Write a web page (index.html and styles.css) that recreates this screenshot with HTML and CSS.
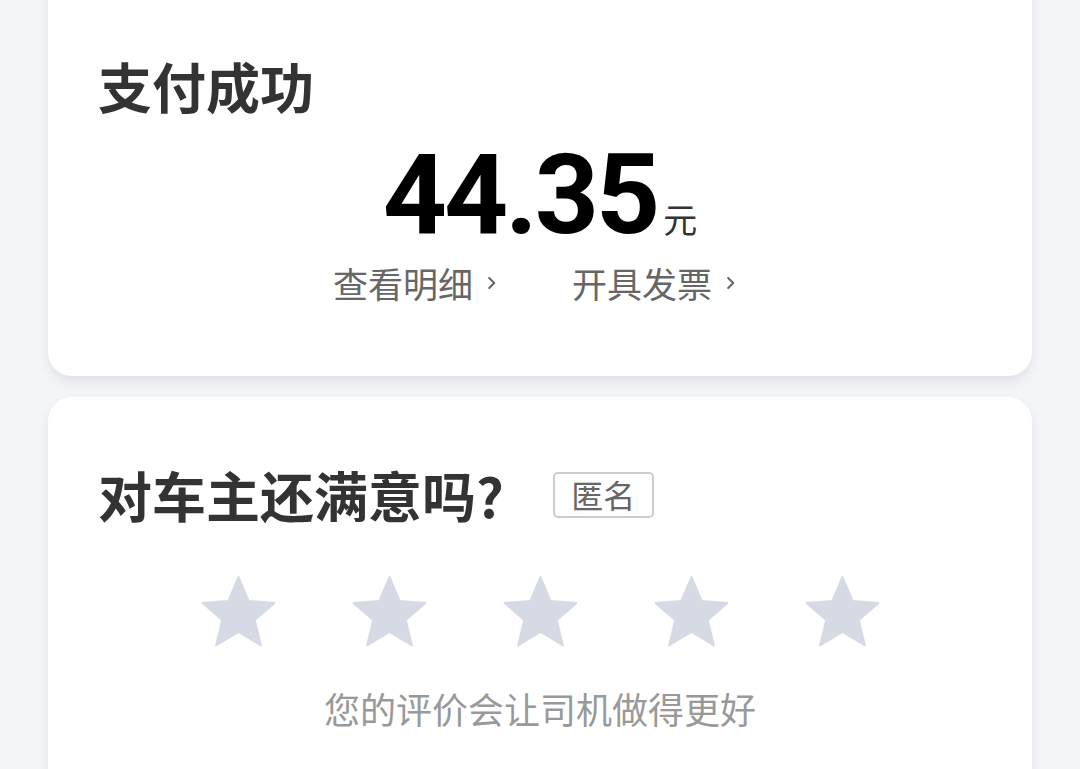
FILE: index.html
```html
<!DOCTYPE html>
<html lang="zh">
<head>
<meta charset="utf-8">
<link rel="stylesheet" href="styles.css">
</head>
<body>
<div class="page">
  <section class="card pay">
    <h1 class="title">支付成功</h1>
    <div class="amount-row">
      <span class="amount">44.35</span><span class="unit">元</span>
    </div>
    <div class="links">
      <a class="link">查看明细<svg class="chev" viewBox="0 0 10 16"><path d="M2.5 3.5 L7 8 L2.5 12.5" fill="none" stroke="#666" stroke-width="1.8" stroke-linecap="round" stroke-linejoin="round"/></svg></a>
      <a class="link">开具发票<svg class="chev" viewBox="0 0 10 16"><path d="M2.5 3.5 L7 8 L2.5 12.5" fill="none" stroke="#666" stroke-width="1.8" stroke-linecap="round" stroke-linejoin="round"/></svg></a>
    </div>
  </section>
  <section class="card rate">
    <div class="rate-head">
      <h2 class="title">对车主还满意吗?</h2>
      <span class="badge">匿名</span>
    </div>
    <div class="stars">
      <svg class="star" viewBox="0 0 24 23.2"><path d="M12 0.6L15.26 8.32 23.6 9.0 17.27 14.51 19.23 22.7 12 18.34 4.77 22.7 6.73 14.51 0.4 9.0 8.74 8.32Z" fill="#d5dae4" stroke="#d5dae4" stroke-width="0.6" stroke-linejoin="round"/></svg>
      <svg class="star" viewBox="0 0 24 23.2"><path d="M12 0.6L15.26 8.32 23.6 9.0 17.27 14.51 19.23 22.7 12 18.34 4.77 22.7 6.73 14.51 0.4 9.0 8.74 8.32Z" fill="#d5dae4" stroke="#d5dae4" stroke-width="0.6" stroke-linejoin="round"/></svg>
      <svg class="star" viewBox="0 0 24 23.2"><path d="M12 0.6L15.26 8.32 23.6 9.0 17.27 14.51 19.23 22.7 12 18.34 4.77 22.7 6.73 14.51 0.4 9.0 8.74 8.32Z" fill="#d5dae4" stroke="#d5dae4" stroke-width="0.6" stroke-linejoin="round"/></svg>
      <svg class="star" viewBox="0 0 24 23.2"><path d="M12 0.6L15.26 8.32 23.6 9.0 17.27 14.51 19.23 22.7 12 18.34 4.77 22.7 6.73 14.51 0.4 9.0 8.74 8.32Z" fill="#d5dae4" stroke="#d5dae4" stroke-width="0.6" stroke-linejoin="round"/></svg>
      <svg class="star" viewBox="0 0 24 23.2"><path d="M12 0.6L15.26 8.32 23.6 9.0 17.27 14.51 19.23 22.7 12 18.34 4.77 22.7 6.73 14.51 0.4 9.0 8.74 8.32Z" fill="#d5dae4" stroke="#d5dae4" stroke-width="0.6" stroke-linejoin="round"/></svg>
    </div>
    <p class="hint">您的评价会让司机做得更好</p>
  </section>
</div>
</body>
</html>
```

FILE: styles.css
```css
html, body {
  margin: 0;
  padding: 0;
  background: #f4f5f8;
  height: 769px;
  overflow: hidden;
}
body {
  font-family: "Noto Sans CJK SC", "Noto Sans", sans-serif;
}
.page {
  padding: 0 48px;
  display: flex;
  flex-direction: column;
  gap: 21px;
}
.card {
  background: #fff;
  border-radius: 24px;
  box-shadow: 0 6px 12px rgba(0,0,0,0.08);
}
.pay {
  margin-top: -30px;
  padding: 88px 50px 0;
  height: 318px;
}
.title {
  margin: 0;
  font-size: 54px;
  line-height: 56px;
  font-weight: 700;
  color: #333;
}
.amount-row {
  display: flex;
  justify-content: center;
  align-items: baseline;
  margin-top: 31px;
  height: 100px;
}
.amount {
  font-family: Roboto, "Liberation Sans", sans-serif;
  font-weight: 700;
  font-size: 112px;
  line-height: 100px;
  letter-spacing: -3px;
  color: #000;
}
.unit {
  font-size: 34px;
  line-height: 1;
  color: #333;
  margin-left: 6px;
}
.links {
  display: flex;
  justify-content: center;
  gap: 74px;
  margin-top: 16px;
  padding-right: 10px;
}
.link {
  display: flex;
  align-items: center;
  font-size: 35px;
  line-height: 44px;
  color: #666;
}
.chev {
  width: 12px;
  height: 18px;
  margin-left: 13px;
}
.rate {
  padding: 70px 50px 0;
  height: 400px;
}
.rate-head {
  display: flex;
  align-items: center;
  gap: 49px;
}
.badge {
  display: inline-block;
  box-sizing: border-box;
  height: 46px;
  width: 101px;
  border: 2px solid #cdcdcd;
  border-radius: 5px;
  font-size: 32px;
  line-height: 40px;
  text-align: center;
  color: #666;
}
.stars {
  display: flex;
  justify-content: center;
  gap: 76px;
  margin-top: 52px;
}
.star {
  width: 75px;
  height: 72px;
}
.hint {
  margin: 37px 0 0;
  text-align: center;
  font-size: 36px;
  line-height: 48px;
  color: #999;
}
```
